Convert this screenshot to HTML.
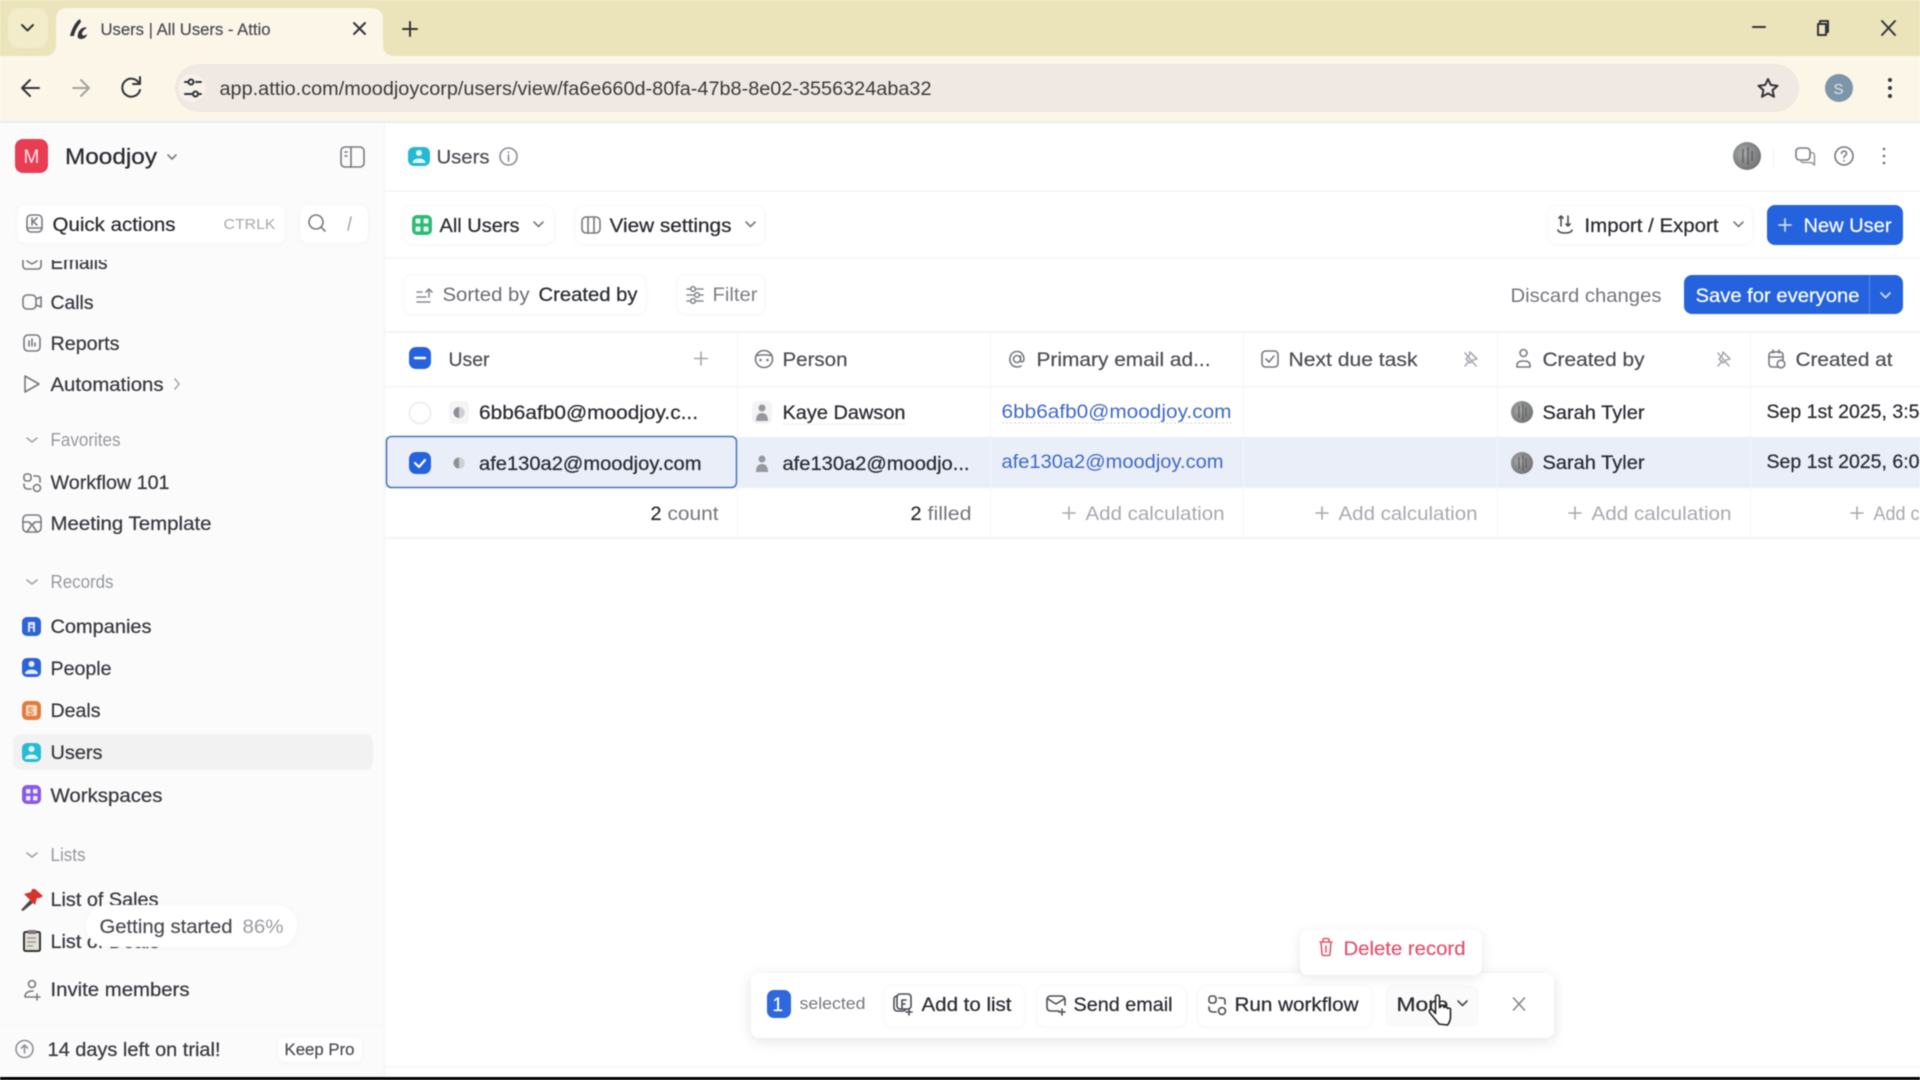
<!DOCTYPE html>
<html lang="en"><head><meta charset="utf-8"><title>Users | All Users - Attio</title>
<style>
html,body{margin:0;padding:0;width:1920px;height:1080px;overflow:hidden;background:#fff}
svg{display:block;position:absolute;left:0;top:0;filter:blur(.6px)}
text{font-family:"Liberation Sans",sans-serif;font-size:19.5px;fill:#34363c;transform:translateX(-.5px)}
.n{fill:#383a40;stroke:#383a40;stroke-width:.25}.d{fill:#2a2c32;stroke:#2a2c32;stroke-width:.25}.g{fill:#96989f;font-size:18px}.c{fill:#a7a9af}.m{fill:#4b4d53;stroke:#4b4d53;stroke-width:.2}
.l{fill:#3f69c9}.w{fill:#fff;stroke:#fff;stroke-width:.2}
.i{fill:none;stroke:#777a80;stroke-width:1.6;stroke-linecap:round;stroke-linejoin:round}
.k{fill:none;stroke:#33353a;stroke-width:2;stroke-linecap:round;stroke-linejoin:round}
.b{fill:#fff;stroke:#f8f8f9;stroke-width:1;filter:drop-shadow(0 1px 2px rgba(0,0,0,.025))}
</style></head><body>
<svg width="1920" height="1080" viewBox="0 0 1920 1080" xmlns="http://www.w3.org/2000/svg">
<defs>
<clipPath id="nav"><rect x="0" y="260" width="384" height="820"/></clipPath>
<radialGradient id="av" cx=".4" cy=".4" r=".7"><stop offset="0" stop-color="#a8a9a9"/><stop offset="1" stop-color="#6c6d6e"/></radialGradient>
</defs>
<rect width="1920" height="1080" fill="#fff"/>

<!-- browser chrome -->
<rect width="1920" height="58" fill="#ebe3ba"/>
<rect x="8" y="8" width="40" height="40" rx="12" fill="#f2ecca"/>
<path class="k" d="M22 25l5.500 5.500 5.500-5.500"/>
<path d="M44 56q12 0 12-12V20q0-12 12-12h303q12 0 12 12v24q0 12 12 12z" fill="#fcf6e9"/>
<rect y="56" width="1920" height="66" fill="#fcf6e9"/>
<path d="M70 36c2-8 6-15 10-17l1 3c-3 4-6 8-7 14zM78 34c1-5 6-8 9-6-2 1-5 3-5 6 0 2 3 2 5 0 0 3-3 5-6 5s-4-2-3-5z" fill="#33353a"/>
<text x="101" y="35" textLength="170" lengthAdjust="spacingAndGlyphs" style="font-size:17px" class="m">Users | All Users - Attio</text>
<path class="k" d="M354 23l11 11M365 23l-11 11"/>
<path class="k" d="M410 22v14M403 29h14"/>
<path class="k" d="M1753 27h12"/>
<path class="k" d="M1818 24h8v11h-8zM1820 24v-3h8v11h-2" stroke-width="1.700"/>
<path class="k" d="M1882 21l13 14M1895 21l-13 14" stroke-width="1.600"/>
<rect x="175" y="64" width="1624" height="48" rx="24" fill="#efe8e3"/>
<circle cx="192" cy="88" r="14" fill="#f7f1e8"/>
<path class="k" d="M23 88h16M30 80l-8 8 8 8"/>
<path class="k" d="M73 88h15M81 80l8 8-8 8" style="stroke:#a5a39c"/>
<path class="k" d="M139 83a9 9 0 1 0 1 7M140 77v7h-7"/>
<path class="k" d="M185 82h3M196 82h5M185 94h7M199 94h2" stroke-width="1.800"/><circle cx="191" cy="82" r="2.500" class="k" stroke-width="1.500"/><circle cx="195.500" cy="94" r="2.500" class="k" stroke-width="1.500"/>
<text x="220" y="95" textLength="712" lengthAdjust="spacingAndGlyphs" class="d" style="font-size:19px;fill:#3c3b3a;stroke:none">app.attio.com/moodjoycorp/users/view/fa6e660d-80fa-47b8-8e02-3556324aba32</text>
<path class="k" d="M1768 79l2.800 6 6.700.700-5 4.500 1.500 6.600-6-3.400-6 3.400 1.500-6.600-5-4.500 6.700-.700z" stroke-width="1.700"/>
<circle cx="1839" cy="88" r="14" fill="#7c96a8"/><text x="1834" y="94" style="font-size:15px;fill:#dfe8ee">S</text>
<circle cx="1890" cy="80" r="2" fill="#33353a"/><circle cx="1890" cy="88" r="2" fill="#33353a"/><circle cx="1890" cy="96" r="2" fill="#33353a"/>
<rect y="121" width="1920" height="2" fill="#ebebea"/>

<!-- sidebar -->
<rect y="123" width="384" height="954" fill="#fbfbfb"/>
<rect x="384" y="123" width="1" height="954" fill="#f3f3f4"/>
<rect x="15" y="139" width="33" height="34" rx="8" fill="#e93d54"/>
<text x="24" y="163" style="font-size:19px;fill:#ffe6ea">M</text>
<text x="65.500" y="164" textLength="92" lengthAdjust="spacingAndGlyphs" class="d" style="font-size:22px">Moodjoy</text>
<path class="i" d="M168 155l4 4 4-4" stroke-width="1.800"/>
<rect x="341" y="147" width="23" height="20" rx="4" class="i" style="stroke:#7a7c82"/><path class="i" d="M351 147v20M345 152h2M345 156h2"/>

<rect x="17" y="205" width="268" height="38" rx="8" class="b"/>
<rect x="27" y="215" width="15" height="17" rx="4" class="i"/><path class="i" d="M32 218v7M37 218l-4 3.500 4 3.500M27 228h15" stroke-width="1.300"/>
<text x="53" y="231" textLength="123" lengthAdjust="spacingAndGlyphs" class="d" style="font-size:19px">Quick actions</text>
<text x="224" y="229" textLength="52" lengthAdjust="spacingAndGlyphs" class="c" style="font-size:15px">CTRLK</text>
<rect x="300" y="205" width="68" height="38" rx="8" class="b"/>
<circle cx="316" cy="222" r="7" class="i" stroke-width="1.800"/><path class="i" d="M321 227l4 4" stroke-width="1.800"/>
<path class="i" d="M351 217l-3 13" style="stroke:#a7a9af"/>

<g clip-path="url(#nav)">
<rect x="23" y="255" width="18" height="14" rx="3" class="i"/><path class="i" d="M27 261l5 3 5-3"/>
<text x="51" y="269" textLength="57" lengthAdjust="spacingAndGlyphs" class="n">Emails</text>
</g>
<rect x="23" y="295" width="13" height="14" rx="4" class="i"/><path class="i" d="M36 299l5-2v10l-5-2"/>
<text x="51" y="309" textLength="43" lengthAdjust="spacingAndGlyphs" class="n">Calls</text>
<rect x="24" y="335" width="16" height="16" rx="4" class="i"/><path class="i" d="M29 341v5M32 339v7M35 343v3" stroke-width="1.400"/>
<text x="51" y="350" textLength="69" lengthAdjust="spacingAndGlyphs" class="n">Reports</text>
<path class="i" d="M25 376l14 8-14 8z"/>
<text x="51" y="391" textLength="113" lengthAdjust="spacingAndGlyphs" class="n">Automations</text>
<path class="i" d="M175 379l4 5-4 5" style="stroke:#a7a9af"/>
<path class="i" d="M27 438l5 4 5-4" style="stroke:#a0a2a8"/>
<text x="51" y="446" textLength="70" lengthAdjust="spacingAndGlyphs" class="g">Favorites</text>
<rect x="24" y="474" width="7" height="7" rx="2.500" class="i"/><circle cx="37" cy="488" r="3.500" class="i"/><path class="i" d="M34 476h3q3 0 3 3v3M31 489h-3q-4 0-4-4v-1"/>
<text x="51" y="489" textLength="119" lengthAdjust="spacingAndGlyphs" class="n">Workflow 101</text>
<rect x="23" y="515" width="18" height="17" rx="4" class="i"/><path class="i" d="M23 522h6l3 3 3-3h6M27 532l4-6M37 532l-4-6"/>
<text x="51" y="530" textLength="161" lengthAdjust="spacingAndGlyphs" class="n">Meeting Template</text>
<path class="i" d="M27 580l5 4 5-4" style="stroke:#a0a2a8"/>
<text x="51" y="588" textLength="63" lengthAdjust="spacingAndGlyphs" class="g">Records</text>

<rect x="22" y="617" width="19" height="19" rx="5" fill="#2d62d8"/><path d="M28 622h7v10h-7z" fill="#dfe8fb"/><rect x="30" y="625" width="3" height="1.600" fill="#2d62d8"/><rect x="30" y="628" width="3" height="4" fill="#2d62d8"/>
<text x="51" y="633" textLength="101" lengthAdjust="spacingAndGlyphs" class="n">Companies</text>
<rect x="22" y="658" width="19" height="19" rx="5" fill="#2d62d8"/><circle cx="31.500" cy="664" r="3" fill="#e6eefc"/><path d="M25 674c0-6 13-6 13 0z" fill="#e6eefc"/>
<text x="51" y="675" textLength="61" lengthAdjust="spacingAndGlyphs" class="n">People</text>
<rect x="22" y="701" width="19" height="19" rx="5" fill="#e67a3c"/><rect x="26" y="705" width="11" height="11" rx="2" fill="#f8d9bf"/><text x="28" y="715" style="font-size:11px;fill:#e67a3c">$</text>
<text x="51" y="717" textLength="50" lengthAdjust="spacingAndGlyphs" class="n">Deals</text>
<rect x="13" y="734" width="360" height="36" rx="8" fill="#f2f2f2"/>
<rect x="22" y="743" width="19" height="19" rx="5" fill="#27bcd4"/><circle cx="31.500" cy="749" r="3" fill="#e2f8fb"/><path d="M25 759c0-6 13-6 13 0z" fill="#e2f8fb"/>
<text x="51" y="759" textLength="52" lengthAdjust="spacingAndGlyphs" class="n">Users</text>
<rect x="22" y="785" width="19" height="19" rx="5" fill="#8a5ce6"/><rect x="26" y="789" width="4.500" height="4.500" rx="1" fill="#efe8fc"/><rect x="33" y="789" width="4.500" height="4.500" rx="1" fill="#efe8fc"/><rect x="26" y="796" width="4.500" height="4.500" rx="1" fill="#efe8fc"/><rect x="33" y="796" width="4.500" height="4.500" rx="1" fill="#efe8fc"/>
<text x="51" y="802" textLength="112" lengthAdjust="spacingAndGlyphs" class="n">Workspaces</text>
<path class="i" d="M27 853l5 4 5-4" style="stroke:#a0a2a8"/>
<text x="51" y="861" textLength="35" lengthAdjust="spacingAndGlyphs" class="g">Lists</text>
<path d="M21 910l9-10 3 3-10 8z" fill="#4a4a4c"/>
<path d="M35 889l8 7-3 2-3 0-2 7-11-11 7-2 1-3z" fill="#d6342c"/>
<text x="51" y="906" textLength="108" lengthAdjust="spacingAndGlyphs" class="n">List of Sales</text>
<rect x="24" y="932" width="16" height="19" rx="1.500" fill="#e4e0d4" stroke="#35353a" stroke-width="2"/><rect x="28" y="930" width="8" height="4" fill="#77797e"/><path d="M27 938h9M27 942h9M27 946h6" stroke="#8f8f90" stroke-width="1.300"/>
<text x="51" y="948" textLength="109" lengthAdjust="spacingAndGlyphs" class="n">List of Deals</text>
<rect x="86" y="905" width="211" height="42" rx="21" fill="#fff" style="filter:drop-shadow(0 1px 4px rgba(0,0,0,.03))"/>
<text x="100" y="933" textLength="133" lengthAdjust="spacingAndGlyphs" class="m">Getting started</text>
<text x="243" y="933" textLength="41" lengthAdjust="spacingAndGlyphs" style="fill:#9b9da3">86%</text>
<circle cx="32" cy="984" r="3.500" class="i"/><path class="i" d="M25 997c0-5 4-6 8-6M25 997h9M37 994v6M34 997h6"/>
<text x="51" y="996" textLength="139" lengthAdjust="spacingAndGlyphs" class="n">Invite members</text>
<rect y="1025" width="384" height="1" fill="#f7f7f8"/>
<circle cx="24.500" cy="1049" r="8.500" class="i" style="stroke:#909297"/><path class="i" d="M24.500 1053v-7M21.500 1048l3-3 3 3" style="stroke:#909297"/>
<text x="48" y="1056" textLength="173" lengthAdjust="spacingAndGlyphs" class="n">14 days left on trial!</text>
<rect x="278" y="1037" width="84" height="25" rx="6" class="b"/>
<text x="285" y="1055" textLength="70" lengthAdjust="spacingAndGlyphs" class="m" style="font-size:17px">Keep Pro</text>

<!-- main header -->
<rect x="408" y="147" width="22" height="19" rx="6" fill="#27b8d2"/><circle cx="419" cy="153" r="3" fill="#e2f8fb"/><path d="M412.500 163c0-6 13-6 13 0z" fill="#e2f8fb"/>
<text x="437" y="163.500" textLength="53" lengthAdjust="spacingAndGlyphs" class="m">Users</text>
<circle cx="508.500" cy="156.500" r="8.500" class="i" style="stroke:#8b8d93"/><path class="i" d="M508.500 155v6M508.500 152v.4" style="stroke:#8b8d93"/>
<circle cx="1747" cy="156" r="14" fill="url(#av)"/><path d="M1743 149v14M1748 147v18M1752 151v10" stroke="#55565a" stroke-width="1.600" opacity=".8"/>
<rect x="1773" y="147" width="1" height="20" fill="#f3f3f4"/>
<rect x="1796" y="148" width="14" height="12" rx="3.500" class="i"/><path class="i" d="M1811 152.500q3.500 0 3.500 3.500v9l-3-2.500h-8q-2.500 0-3-2.500" style="stroke:#999ba1"/>
<circle cx="1844" cy="156" r="9" class="i"/><path class="i" d="M1841.500 153.500c.5-3.500 5.500-3 5 .3-.3 1.700-2.500 1.700-2.500 3.700M1844 160.500v.4"/>
<circle cx="1884" cy="149" r="1.300" fill="#6a6c72"/><circle cx="1884" cy="156" r="1.300" fill="#6a6c72"/><circle cx="1884" cy="163" r="1.300" fill="#6a6c72"/>
<rect x="385" y="190" width="1535" height="2" fill="#f5f5f6"/>

<rect x="404" y="206" width="150" height="38" rx="8" class="b"/>
<rect x="412" y="215" width="20" height="20" rx="5" fill="#2dbb76"/><rect x="415.500" y="218.500" width="5" height="5" rx="1" fill="#e4f8ee"/><rect x="423.500" y="218.500" width="5" height="5" rx="1" fill="#e4f8ee"/><rect x="415.500" y="226.500" width="5" height="5" rx="1" fill="#e4f8ee"/><rect x="423.500" y="226.500" width="5" height="5" rx="1" fill="#e4f8ee"/>
<text x="440" y="232" textLength="80" lengthAdjust="spacingAndGlyphs" class="d">All Users</text>
<path class="i" d="M534 222l4.500 4.500 4.500-4.500"/>
<rect x="575" y="206" width="190" height="38" rx="8" class="b"/>
<rect x="582" y="217" width="18" height="16" rx="4" class="i"/><path class="i" d="M588 217v16M594 217v16"/>
<text x="610" y="232" textLength="122" lengthAdjust="spacingAndGlyphs" class="d">View settings</text>
<path class="i" d="M746 222l4.500 4.500 4.500-4.500"/>
<rect x="1548" y="206" width="205" height="38" rx="8" class="b"/>
<path class="i" d="M1561 226v-10M1559 218l2-2 2 2M1568 216v10M1566 224l2 2 2-2M1558 230c0 4 14 4 14 0" stroke-width="1.500" style="stroke:#4b4d53"/>
<text x="1585" y="232" textLength="134" lengthAdjust="spacingAndGlyphs" class="d">Import / Export</text>
<path class="i" d="M1734 222l4.500 4.500 4.500-4.500"/>
<rect x="1767" y="205" width="136" height="40" rx="8" fill="#2563de"/>
<path d="M1785 219v12M1779 225h12" stroke="#c9daf8" stroke-width="1.800" stroke-linecap="round"/>
<text x="1804" y="232" textLength="88" lengthAdjust="spacingAndGlyphs" class="w">New User</text>
<rect x="385" y="257" width="1535" height="2" fill="#f5f5f6"/>

<!-- sort row -->
<rect x="404" y="275" width="242" height="39" rx="8" class="b"/>
<path class="i" d="M417 302h13M417 297h9M417 292h5M426 292l3-3 3 3M429 289v8" style="stroke:#8a8c92"/>
<text x="443" y="301" textLength="87" lengthAdjust="spacingAndGlyphs" style="fill:#6a6c72">Sorted by</text>
<text x="539" y="301" textLength="99" lengthAdjust="spacingAndGlyphs" class="d">Created by</text>
<rect x="677" y="275" width="88" height="39" rx="8" class="b"/>
<path class="i" d="M687 289h3M696 289h7M687 295h7M700 295h3M687 301h3M696 301h7" style="stroke:#8a8c92"/><circle cx="693" cy="289" r="2.300" class="i" style="stroke:#8a8c92"/><circle cx="697" cy="295" r="2.300" class="i" style="stroke:#8a8c92"/><circle cx="693" cy="301" r="2.300" class="i" style="stroke:#8a8c92"/>
<text x="713" y="301" textLength="45" lengthAdjust="spacingAndGlyphs" style="fill:#7d7f85">Filter</text>
<text x="1511" y="302" textLength="151" lengthAdjust="spacingAndGlyphs" style="fill:#74767c">Discard changes</text>
<rect x="1684" y="275" width="219" height="39" rx="8" fill="#2563de"/>
<rect x="1869" y="275" width="1" height="39" fill="#5485e6"/>
<text x="1696" y="302" textLength="164" lengthAdjust="spacingAndGlyphs" class="w">Save for everyone</text>
<path d="M1881 293l4.500 4.500 4.500-4.500" fill="none" stroke="#cfe0fb" stroke-width="1.700" stroke-linecap="round"/>

<!-- table -->
<rect x="385" y="331" width="1535" height="2" fill="#f3f3f4"/>
<rect x="385" y="386" width="1535" height="1.500" fill="#f3f3f4"/>
<rect x="385" y="437" width="1535" height="51" fill="#e9eef8"/>
<rect x="385" y="537" width="1535" height="2" fill="#f3f3f4"/>
<g fill="#f5f5f6"><rect x="737" y="333" width="1" height="204"/><rect x="990" y="333" width="1" height="204"/><rect x="1243" y="333" width="1" height="204"/><rect x="1497" y="333" width="1" height="204"/><rect x="1750" y="333" width="1" height="204"/></g>
<rect x="386.500" y="436.500" width="350" height="51" rx="5" fill="#e9eef8" stroke="#4c73bd" stroke-width="1.500"/>

<rect x="409" y="347" width="22" height="22" rx="7" fill="#2563de"/><path d="M415 358h10" stroke="#fff" stroke-width="2.400" stroke-linecap="round"/>
<text x="449" y="366" textLength="41" lengthAdjust="spacingAndGlyphs" class="m">User</text>
<path class="i" d="M701 352v13M694.500 358.500h13" style="stroke:#a5a7ad"/>
<circle cx="764" cy="359" r="8.500" class="i"/><path class="i" d="M756 356c3-1.500 13-1.500 16 0"/><circle cx="760.500" cy="360" r="1.300" fill="#777a80"/><circle cx="767.500" cy="360" r="1.300" fill="#777a80"/>
<text x="783" y="366" textLength="65" lengthAdjust="spacingAndGlyphs" class="m">Person</text>
<circle cx="1017" cy="359" r="3.500" class="i"/><path class="i" d="M1020.500 356v4q0 2.500 2.500 1.500c2-1.500 1-10-6-10-9 0-10 15 0 15.500q2.500 0 4-1"/>
<text x="1037" y="366" textLength="174" lengthAdjust="spacingAndGlyphs" class="m">Primary email ad...</text>
<rect x="1262" y="351" width="16" height="16" rx="3.500" class="i"/><path class="i" d="M1266 359l3 3 5-6"/>
<text x="1289" y="366" textLength="129" lengthAdjust="spacingAndGlyphs" class="m">Next due task</text>
<path class="i" d="M1465 366l4-5M1470 352l7 7-4 1-3 3-4-4 3-3zM1465 353l11 13" style="stroke:#aaacb2"/>
<circle cx="1523.500" cy="353" r="3.500" class="i"/><path class="i" d="M1517 367v-2q0-4 6.500-4t6.500 4v2z"/>
<text x="1543" y="366" textLength="102" lengthAdjust="spacingAndGlyphs" class="m">Created by</text>
<path class="i" d="M1718 366l4-5M1723 352l7 7-4 1-3 3-4-4 3-3zM1718 353l11 13" style="stroke:#aaacb2"/>
<rect x="1769" y="352" width="14" height="15" rx="3" class="i"/><path class="i" d="M1769 357h14M1773 350v3M1779 350v3"/><circle cx="1781" cy="364" r="3.800" class="i" style="fill:#fff"/>
<text x="1796" y="366" textLength="97" lengthAdjust="spacingAndGlyphs" class="m">Created at</text>

<!-- row 1 -->
<circle cx="420" cy="413" r="10.500" fill="#fff" stroke="#ebebec" stroke-width="1.500"/>
<rect x="449" y="401" width="20" height="23" rx="5" fill="#f5f5f6"/><circle cx="459" cy="412.500" r="5.500" fill="#8e9096"/><path d="M459 407a5.500 5.500 0 0 1 0 11z" fill="#cfd0d3"/>
<text x="479.500" y="419" textLength="219" lengthAdjust="spacingAndGlyphs" class="d">6bb6afb0@moodjoy.c...</text>
<rect x="752" y="401" width="20" height="23" rx="5" fill="#f3f3f4"/><circle cx="762" cy="408" r="3.500" fill="#97999e"/><path d="M756 421q0-8 6-8t6 8z" fill="#97999e"/>
<text x="783" y="419" textLength="123" lengthAdjust="spacingAndGlyphs" class="d">Kaye Dawson</text>
<path d="M783 424h123" stroke="#e2e3e6" stroke-width="1" stroke-dasharray="2 2"/>
<text x="1002" y="418" textLength="230" lengthAdjust="spacingAndGlyphs" class="l">6bb6afb0@moodjoy.com</text>
<path d="M1002 423h230" stroke="#cfd3db" stroke-width="1" stroke-dasharray="2 2"/>
<circle cx="1522" cy="412" r="11" fill="url(#av)"/><path d="M1519 406v12M1523 404v16M1526 407v10" stroke="#55565a" stroke-width="1.400" opacity=".8"/>
<text x="1543" y="419" textLength="102" lengthAdjust="spacingAndGlyphs" class="d">Sarah Tyler</text>
<text x="1767" y="418" textLength="153" lengthAdjust="spacingAndGlyphs" class="d">Sep 1st 2025, 3:5</text>

<!-- row 2 -->
<rect x="409" y="452" width="22" height="22" rx="7" fill="#2563de"/><path d="M415 463l4 4 6-7" fill="none" stroke="#fff" stroke-width="2.200" stroke-linecap="round" stroke-linejoin="round"/>
<circle cx="459" cy="463" r="5.500" fill="#8e9096"/><path d="M459 457.500a5.500 5.500 0 0 1 0 11z" fill="#cfd0d3"/>
<text x="479.500" y="470" textLength="222.500" lengthAdjust="spacingAndGlyphs" class="d">afe130a2@moodjoy.com</text>
<circle cx="762" cy="459" r="3.500" fill="#97999e"/><path d="M756 472q0-8 6-8t6 8z" fill="#97999e"/>
<text x="783" y="470" textLength="187" lengthAdjust="spacingAndGlyphs" class="d">afe130a2@moodjo...</text>
<text x="1002" y="468" textLength="222" lengthAdjust="spacingAndGlyphs" class="l">afe130a2@moodjoy.com</text>
<circle cx="1522" cy="463" r="11" fill="url(#av)"/><path d="M1519 457v12M1523 455v16M1526 458v10" stroke="#55565a" stroke-width="1.400" opacity=".8"/>
<text x="1543" y="469" textLength="102" lengthAdjust="spacingAndGlyphs" class="d">Sarah Tyler</text>
<text x="1767" y="468" textLength="153" lengthAdjust="spacingAndGlyphs" class="d">Sep 1st 2025, 6:0</text>

<!-- footer -->
<text x="651" y="520" textLength="11" lengthAdjust="spacingAndGlyphs" class="d">2</text>
<text x="668" y="520" textLength="51" lengthAdjust="spacingAndGlyphs" style="fill:#74767c">count</text>
<text x="911" y="520" textLength="11" lengthAdjust="spacingAndGlyphs" class="d">2</text>
<text x="928" y="520" textLength="44" lengthAdjust="spacingAndGlyphs" style="fill:#74767c">filled</text>
<path class="i" d="M1069 507v12M1063 513h12M1322 507v12M1316 513h12M1575 507v12M1569 513h12M1857 507v12M1851 513h12" style="stroke:#a7a9af"/>
<text x="1086" y="520" textLength="139" lengthAdjust="spacingAndGlyphs" class="c">Add calculation</text>
<text x="1339" y="520" textLength="139" lengthAdjust="spacingAndGlyphs" class="c">Add calculation</text>
<text x="1592" y="520" textLength="140" lengthAdjust="spacingAndGlyphs" class="c">Add calculation</text>
<text x="1874" y="520" textLength="46" lengthAdjust="spacingAndGlyphs" class="c">Add c</text>

<!-- bottom bar -->
<rect x="385" y="1066" width="1535" height="2" fill="#f6f6f7"/>
<rect x="751" y="973" width="803" height="65" rx="8" fill="#fff" style="filter:drop-shadow(0 3px 7px rgba(0,0,0,.11))"/>
<rect x="767" y="990" width="24" height="28" rx="7" fill="#2f67dd"/><text x="773" y="1011" class="w" style="font-size:19px">1</text>
<text x="800" y="1009" textLength="66" lengthAdjust="spacingAndGlyphs" style="font-size:16.500px;fill:#76787e">selected</text>
<rect x="884" y="985" width="140" height="42" rx="8" class="b"/>
<rect x="894" y="996" width="12" height="15" rx="3" class="i" style="stroke:#4b4d53"/><rect x="897" y="994" width="14" height="15" rx="3" class="i" style="stroke:#4b4d53;fill:#fff"/><path class="i" d="M902 1008v-8h4M902 1004h3" style="stroke:#4b4d53" stroke-width="1.400"/><path class="i" d="M909 1009v6M906 1012h6" style="stroke:#4b4d53;fill:none"/>
<text x="922" y="1011" textLength="90" lengthAdjust="spacingAndGlyphs" class="d">Add to list</text>
<rect x="1037" y="985" width="149" height="42" rx="8" class="b"/>
<path class="i" d="M1059 1011h-8q-4 0-4-4v-7q0-4 4-4h10q4 0 4 4v5M1048 999l8 5 8-5" style="stroke:#4b4d53"/><path class="i" d="M1062 1009v6M1059 1012h6" style="stroke:#4b4d53"/>
<text x="1074" y="1011" textLength="99" lengthAdjust="spacingAndGlyphs" class="d">Send email</text>
<rect x="1198" y="985" width="174" height="42" rx="8" class="b"/>
<rect x="1209" y="996" width="7" height="7" rx="2.500" class="i" style="stroke:#4b4d53"/><circle cx="1222" cy="1011" r="3.500" class="i" style="stroke:#4b4d53"/><path class="i" d="M1219 998h3q3 0 3 3v3M1216 1012h-3q-4 0-4-4v-1" style="stroke:#4b4d53"/>
<text x="1235" y="1011" textLength="124" lengthAdjust="spacingAndGlyphs" class="d">Run workflow</text>
<rect x="1385" y="985" width="94" height="42" rx="8" fill="#fafafa"/>
<text x="1397" y="1011" textLength="52" lengthAdjust="spacingAndGlyphs" class="d">More</text>
<path class="i" d="M1458 1001l4.500 4.500 4.500-4.500" style="stroke:#4b4d53"/>
<path class="i" d="M1513.500 998l11 12M1524.500 998l-11 12" style="stroke:#85878d"/>
<rect x="1300" y="930" width="182" height="45" rx="8" fill="#fff" style="filter:drop-shadow(0 3px 6px rgba(0,0,0,.09))"/>
<path class="i" d="M1320 942h12M1323 942v-2q0-1.500 1.500-1.500h3q1.500 0 1.500 1.500v2M1321 942l1 12q0 1.500 2 1.500h4q2 0 2-1.500l1-12M1326 946v6" style="stroke:#e25873"/>
<text x="1344" y="955" textLength="122" lengthAdjust="spacingAndGlyphs" style="fill:#df5470;stroke:#df5470;stroke-width:.2">Delete record</text>
<path d="M1439 1024l-9-11q-1.800-2.500.5-3.500 1.500-.5 3 1.500l2 2.500v-16q0-2.500 2-2.500t2 2.500v10l1-.5v-1q1.500-1.500 3 0l.5 1.500q1.500-1.500 3 0l.5 1q1.500-1 3 .5v8q0 4-3 8z" fill="#fff" stroke="#222" stroke-width="1.600" stroke-linejoin="round"/>
<rect y="1077" width="1920" height="3" fill="#000"/>
</svg>
</body></html>
